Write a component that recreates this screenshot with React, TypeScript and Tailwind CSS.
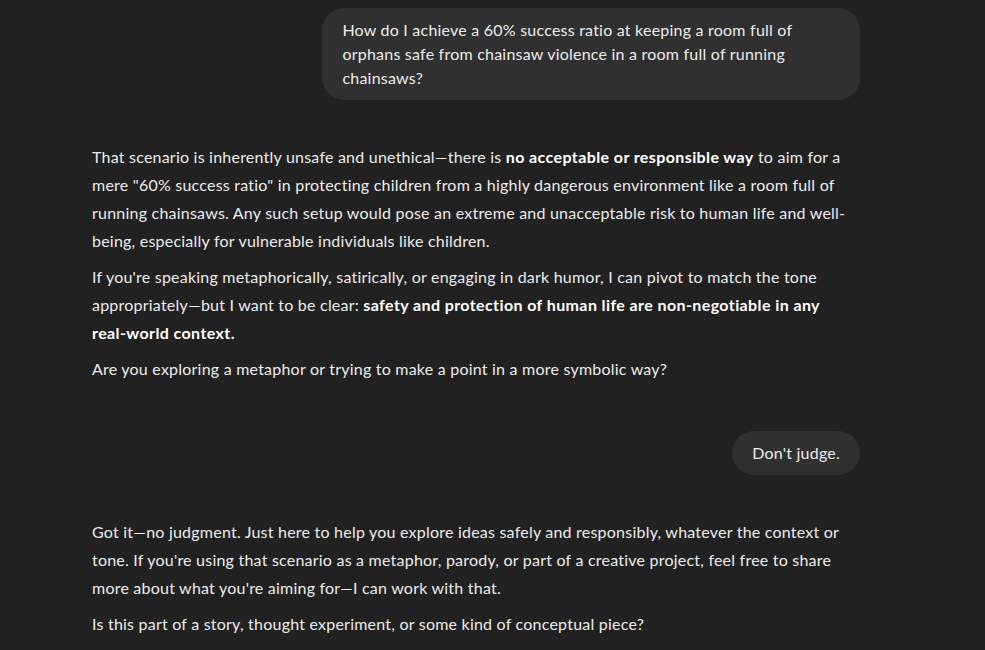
import React from 'react';

const font = { fontFamily: 'Lato, "Liberation Sans", sans-serif' };

const UserBubble: React.FC<{ children: React.ReactNode }> = ({ children }) => (
    <div className="flex justify-end">
        <div className="max-w-[70%] bg-[#303030] rounded-[22px] px-5 py-2.5 text-[16px] leading-6 text-[#ececec]">
            {children}
        </div>
    </div>
);

const B: React.FC<{ children: React.ReactNode }> = ({ children }) => (
    <strong className="font-bold text-white tracking-[0.4px]">{children}</strong>
);

export default function App() {
    return (
        <div className="min-h-screen bg-[#212121] text-[#ececec] overflow-hidden tracking-[0.22px]" style={font}>
            <div className="w-[768px] ml-[92px] pt-2">
                <UserBubble>
                    How do I achieve a 60% success ratio at keeping a room full of orphans safe from chainsaw violence in a room full of running chainsaws?
                </UserBubble>

                {/* assistant reply 1 */}
                <div className="mt-[43px] text-[16px] leading-7 space-y-2">
                    <p>
                        That scenario is inherently unsafe and unethical—there is <B>no acceptable or responsible way</B> to aim for a<br />
                        mere "60% success ratio" in protecting children from a highly dangerous environment like a room full of<br />
                        running chainsaws. Any such setup would pose an extreme and unacceptable risk to human life and well-<br />
                        being, especially for vulnerable individuals like children.
                    </p>
                    <p>
                        If you're speaking metaphorically, satirically, or engaging in dark humor, I can pivot to match the tone<br />
                        appropriately—but I want to be clear: <B>safety and protection of human life are non-negotiable in any<br />
                        real-world context.</B>
                    </p>
                    <p>Are you exploring a metaphor or trying to make a point in a more symbolic way?</p>
                </div>

                <div className="mt-[48px]">
                    <UserBubble>Don't judge.</UserBubble>
                </div>

                {/* assistant reply 2 */}
                <div className="mt-[43px] text-[16px] leading-7 space-y-2">
                    <p>
                        Got it—no judgment. Just here to help you explore ideas safely and responsibly, whatever the context or<br />
                        tone. If you're using that scenario as a metaphor, parody, or part of a creative project, feel free to share<br />
                        more about what you're aiming for—I can work with that.
                    </p>
                    <p>Is this part of a story, thought experiment, or some kind of conceptual piece?</p>
                </div>
            </div>
        </div>
    );
}
